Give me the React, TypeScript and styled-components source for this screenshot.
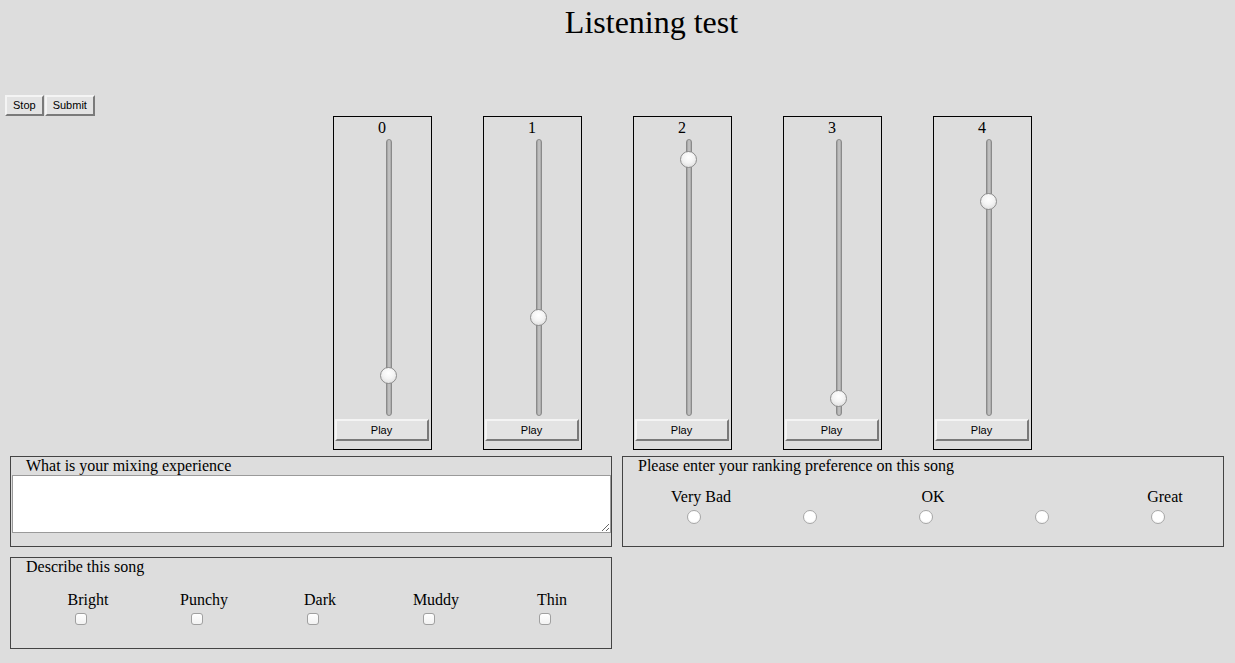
import React from 'react';
import styled, { createGlobalStyle } from 'styled-components';

const GlobalStyle = createGlobalStyle`
  html, body {
    margin: 0;
    padding: 0;
    background: #dddddd;
  }
  body {
    font-family: "Liberation Serif", "Times New Roman", serif;
    font-size: 16px;
    color: #000;
    width: 1235px;
    height: 663px;
    overflow: hidden;
  }
`;

const Page = styled.div`
  width: 1235px;
  height: 663px;
  background: #dddddd;
`;

const Title = styled.h1`
  margin: 0;
  padding: 4px 0 0 68px;
  height: 95px;
  box-sizing: border-box;
  text-align: center;
  font-weight: normal;
  font-size: 32px;
  line-height: 37px;
`;

const Toolbar = styled.div`
  display: flex;
  padding-left: 5px;
  height: 21px;
`;

const Button = styled.button<{ $wide?: boolean }>`
  font-family: "Liberation Sans", Arial, sans-serif;
  font-size: 11px;
  color: #000;
  background: #e3e3e3;
  border: 2px solid;
  border-color: #f4f4f4 #7a7a7a #7a7a7a #f4f4f4;
  padding: 0 ${p => (p.$wide ? '0' : '6px')};
  margin: 0 1px 0 0;
  height: ${p => (p.$wide ? '22px' : '21px')};
  width: ${p => (p.$wide ? '94px' : 'auto')};
  line-height: 17px;
`;

const SliderRow = styled.div`
  display: flex;
  gap: 51px;
  padding-left: 332.5px;
`;

const SliderBox = styled.div`
  width: 99px;
  height: 334px;
  box-sizing: border-box;
  border: 1px solid #000;
  display: flex;
  flex-direction: column;
  align-items: center;
  padding-bottom: 7px;
`;

const SliderLabel = styled.div`
  line-height: 20px;
  height: 20px;
  padding-top: 1px;
  box-sizing: border-box;
`;

const TrackArea = styled.div`
  position: relative;
  width: 16px;
  height: 277px;
  margin: 2px 0 1px 13px;
`;

const Track = styled.div`
  position: absolute;
  left: 5px;
  top: 0;
  bottom: 0;
  width: 4px;
  border: 1px solid #8a8a8a;
  border-radius: 3px;
  background: linear-gradient(to right, #9c9c9c, #c8c8c8 50%, #a6a6a6);
`;

const Thumb = styled.div`
  position: absolute;
  left: -1px;
  width: 15px;
  height: 15px;
  border-radius: 50%;
  border: 1px solid #8d8d8d;
  background: radial-gradient(circle at 50% 35%, #ffffff 0%, #f4f4f4 45%, #d6d6d6 100%);
`;

const PlayWrap = styled.div`
  margin-top: 2px;
`;

const Bottom = styled.div`
  display: grid;
  grid-template-columns: 602px 602px;
  column-gap: 10px;
  align-items: start;
  padding: 6px 0 0 10px;
`;

const Column = styled.div`
  display: flex;
  flex-direction: column;
  gap: 10px;
`;

const Panel = styled.div<{ $h: number }>`
  border: 1px solid #444;
  height: ${p => p.$h}px;
  box-sizing: border-box;
`;

const Legend = styled.div`
  padding-left: 15px;
  line-height: 18px;
`;

const TextArea = styled.textarea`
  display: block;
  margin: 0 0 0 1px;
  width: 599px;
  height: 58px;
  box-sizing: border-box;
  border: 1px solid #9a9a9a;
  background: #fff;
  resize: both;
  font-family: "Liberation Mono", monospace;
`;

const Options = styled.div<{ $pad: number; $top: number }>`
  display: flex;
  padding-left: ${p => p.$pad}px;
  margin-top: ${p => p.$top}px;
`;

const Option = styled.div`
  width: 116px;
  display: flex;
  flex-direction: column;
  align-items: center;
  line-height: 18px;
`;

const OptionText = styled.span`
  min-height: 18px;
`;

const Radio = styled.span`
  display: block;
  width: 12px;
  height: 12px;
  margin: 4px 15px 0 0;
  border-radius: 50%;
  border: 1px solid #a8a8a8;
  background: radial-gradient(circle at 50% 40%, #ffffff 55%, #ececec 100%);
`;

const Check = styled.span`
  display: block;
  width: 10px;
  height: 10px;
  margin: 4px 14px 0 0;
  border-radius: 3px;
  border: 1px solid #a0a0a0;
  background: linear-gradient(#ffffff, #f2f2f2);
`;

const sliders = [0.126, 0.349, 0.954, 0.038, 0.793];
const ranks = ['Very Bad', '', 'OK', '', 'Great'];
const words = ['Bright', 'Punchy', 'Dark', 'Muddy', 'Thin'];

export default function App() {
  return (
    <Page>
      <GlobalStyle />
      <Title>Listening test</Title>
      <Toolbar>
        <Button>Stop</Button>
        <Button>Submit</Button>
      </Toolbar>
      <SliderRow>
        {sliders.map((v, i) => (
          <SliderBox key={i}>
            <SliderLabel>{i}</SliderLabel>
            <TrackArea>
              <Track />
              <Thumb style={{ top: Math.round((1 - v) * 261) }} />
            </TrackArea>
            <PlayWrap>
              <Button $wide>Play</Button>
            </PlayWrap>
          </SliderBox>
        ))}
      </SliderRow>
      <Bottom>
        <Column>
          <Panel $h={91}>
            <Legend>What is your mixing experience</Legend>
            <TextArea />
          </Panel>
          <Panel $h={92}>
            <Legend>Describe this song</Legend>
            <Options $pad={19} $top={15}>
              {words.map(w => (
                <Option key={w}>
                  <OptionText>{w}</OptionText>
                  <Check />
                </Option>
              ))}
            </Options>
          </Panel>
        </Column>
        <Panel $h={91}>
          <Legend>Please enter your ranking preference on this song</Legend>
          <Options $pad={20} $top={13}>
            {ranks.map((r, i) => (
              <Option key={i}>
                <OptionText>{r}</OptionText>
                <Radio />
              </Option>
            ))}
          </Options>
        </Panel>
      </Bottom>
    </Page>
  );
}
